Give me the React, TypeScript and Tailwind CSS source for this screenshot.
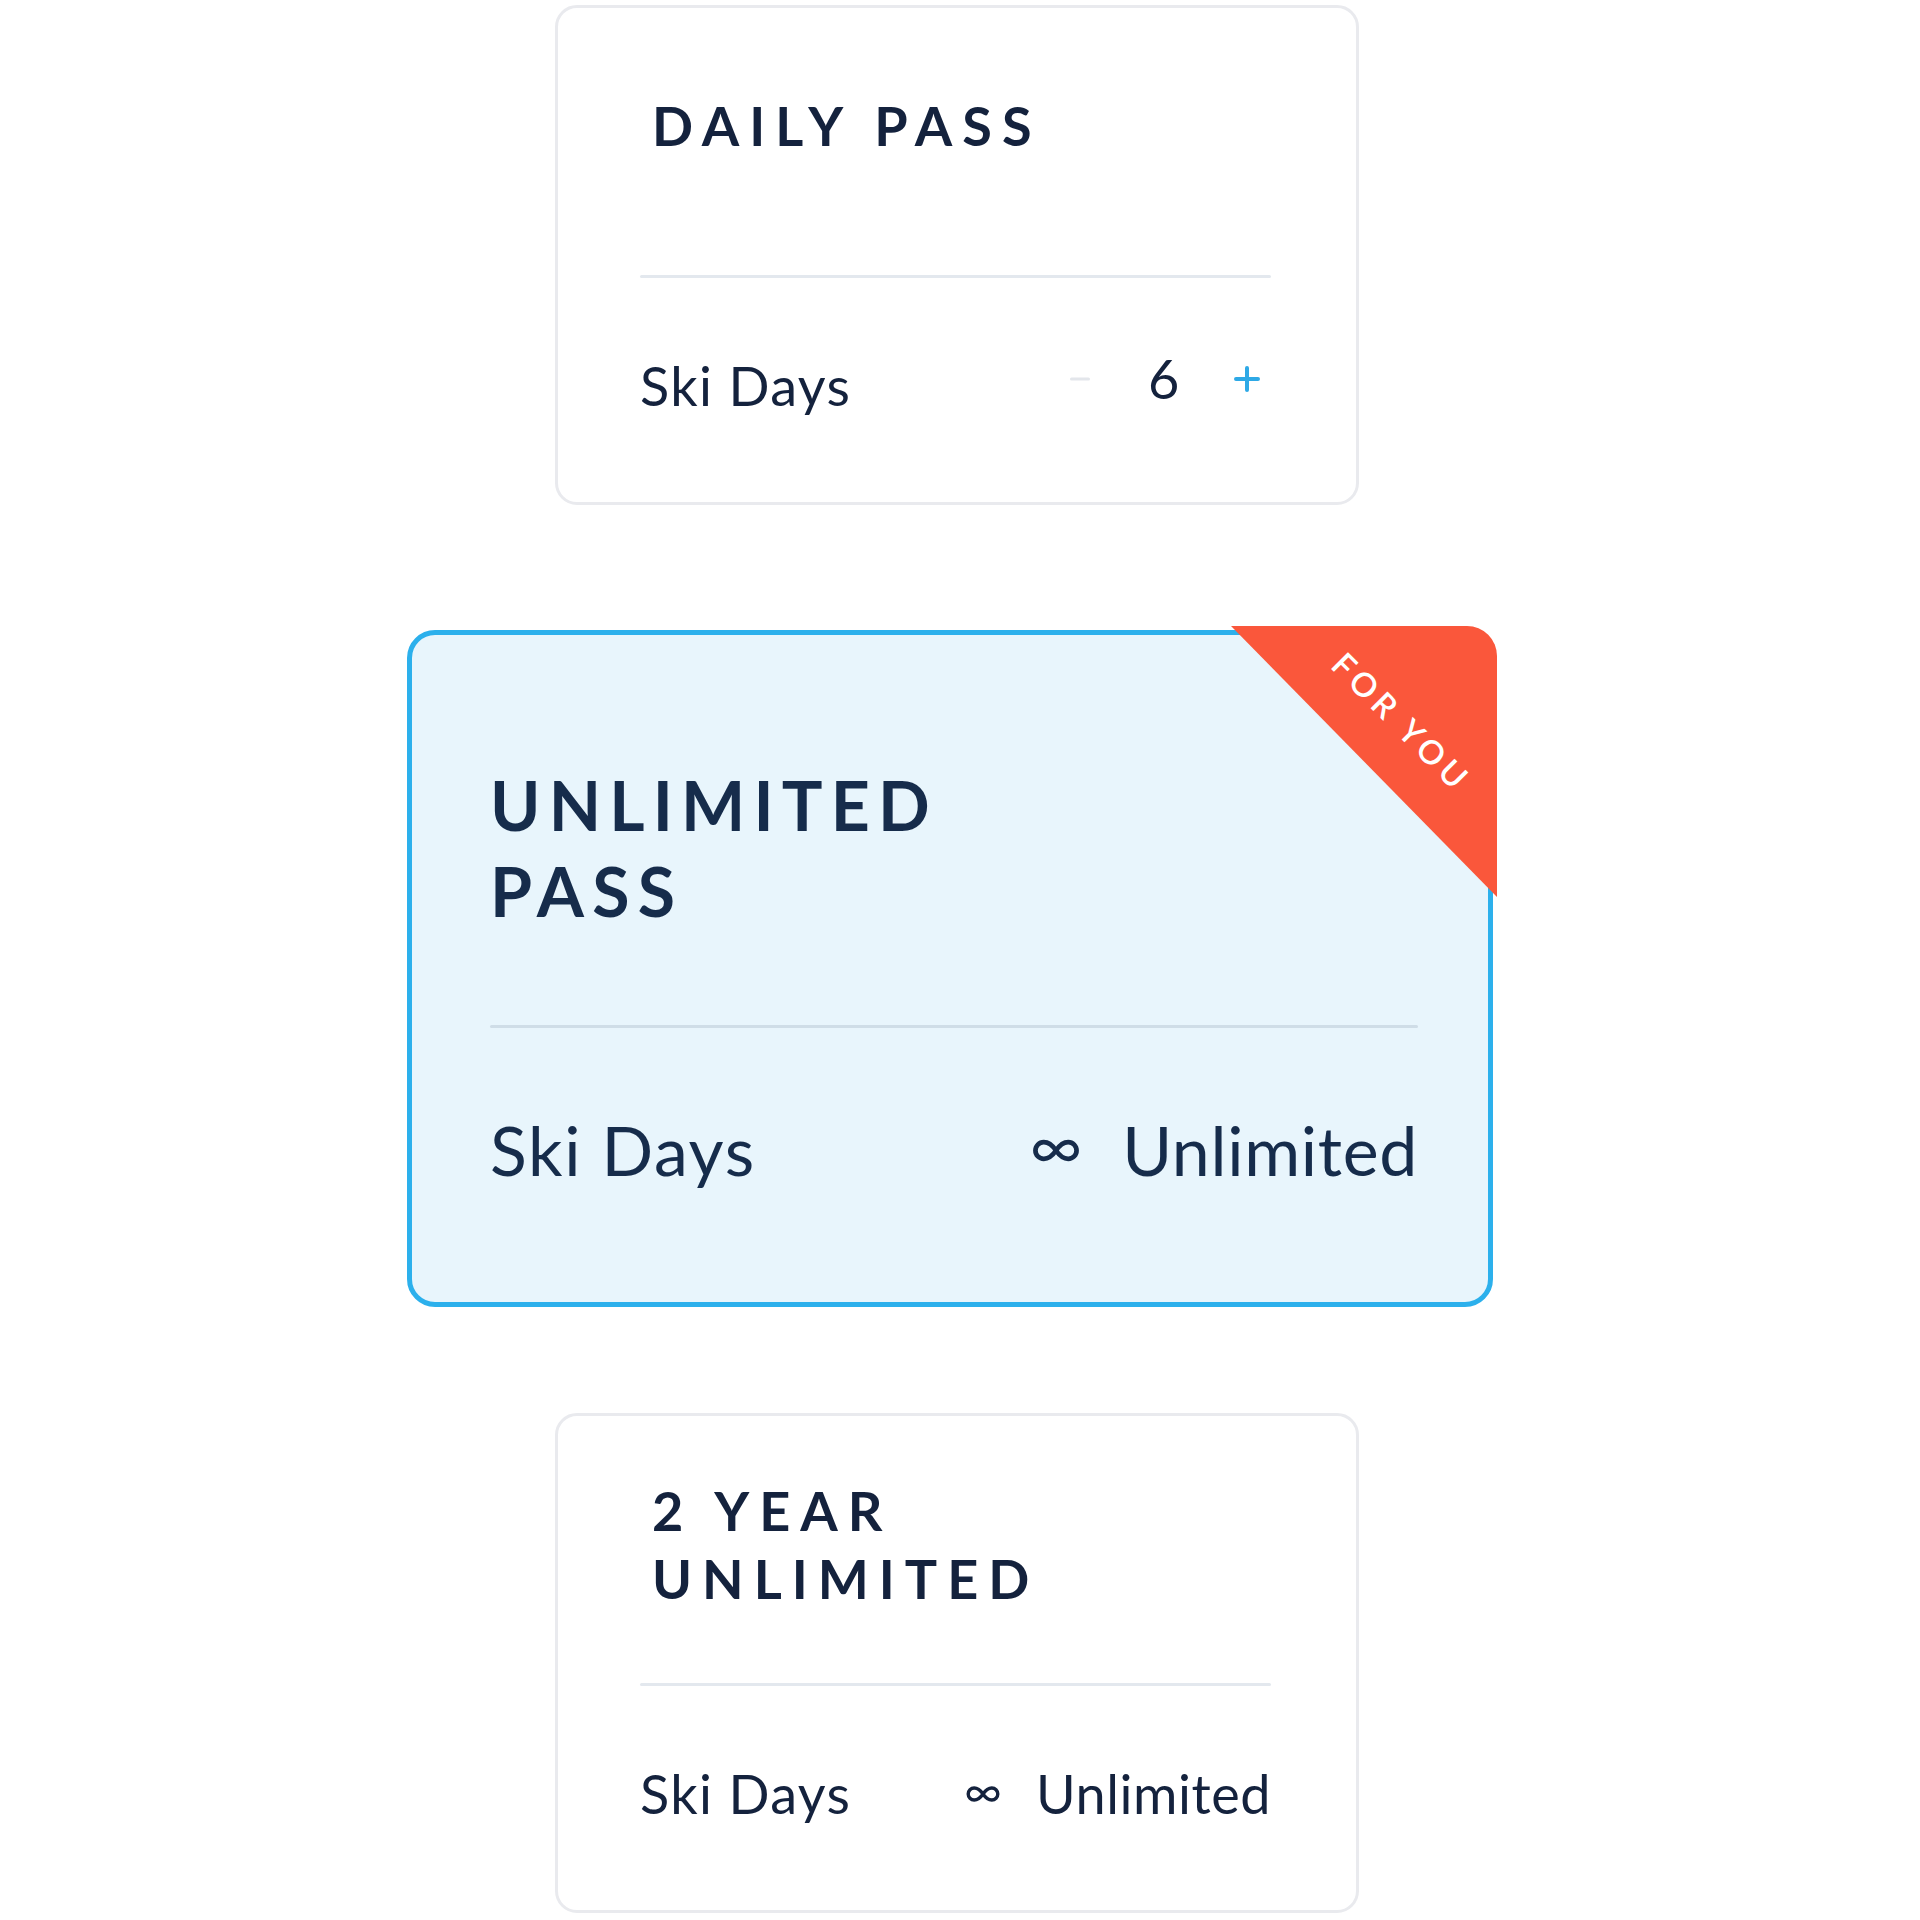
import type { ReactNode } from "react";

function InfinityMark({ className }: { className?: string }) {
  return (
    <svg viewBox="0 0 36 18" fill="none" className={className}>
      <path
        d="M18 9C15 4.6 12.6 3 9.2 3a6 6 0 0 0 0 12c3.4 0 5.8-1.6 8.8-6zm0 0c3-4.4 5.4-6 8.8-6a6 6 0 0 1 0 12c-3.4 0-5.8-1.6-8.8-6z"
        stroke="currentColor"
        strokeWidth="3.4"
        strokeLinejoin="round"
      />
    </svg>
  );
}

function Counter({ value }: { value: number }) {
  return (
    <div className="flex items-center gap-[44px] mb-[14px]">
      <button className="w-12 h-12 flex items-center justify-center" aria-label="decrease">
        <svg viewBox="0 0 20 4" className="w-[20px] h-[4px]">
          <line x1="1.5" y1="2" x2="18.5" y2="2" stroke="#e3e6eb" strokeWidth="3" strokeLinecap="round" />
        </svg>
      </button>
      <span className="w-[31px] text-center">{value}</span>
      <button className="w-12 h-12 flex items-center justify-center" aria-label="increase">
        <svg viewBox="0 0 26 26" className="w-[26px] h-[26px]">
          <path d="M13 2v22M2 13h22" stroke="#2ea9e6" strokeWidth="4" strokeLinecap="round" />
        </svg>
      </button>
    </div>
  );
}

function UnlimitedValue({ big }: { big?: boolean }) {
  return (
    <div className={big ? "flex items-center gap-[41px]" : "flex items-center gap-[35px]"}>
      <InfinityMark className={big ? "w-[50px] h-[25px]" : "w-[36px] h-[18px]"} />
      <span className="tracking-[0.01em]">Unlimited</span>
    </div>
  );
}

function WhiteCard({
  title,
  titleClass,
  children,
}: {
  title: ReactNode;
  titleClass: string;
  children: ReactNode;
}) {
  return (
    <section className="w-[804px] h-[500px] mr-[6px] rounded-[22px] border-[3px] border-[#e9eaee] bg-white pl-[82px] pr-[85px] text-[#14223d] flex flex-col">
      <h2 className={`pl-[12px] max-w-[460px] text-[54px] leading-[68px] font-bold tracking-[0.185em] uppercase ${titleClass}`}>
        {title}
      </h2>
      <div className="h-[3px] bg-[#e3e8ee] rounded-full" />
      <div className="mt-[74px] h-[68px] flex items-center justify-between text-[54px] leading-[68px]">
        {children}
      </div>
    </section>
  );
}

export default function App() {
  return (
    <div className="min-h-[1920px] w-full bg-white flex flex-col items-center pt-[5px] font-[Lato,sans-serif]">
      <WhiteCard title="Daily Pass" titleClass="pt-[84px] mb-[115px]">
        <span className="tracking-[0.025em]">Ski Days</span>
        <Counter value={6} />
      </WhiteCard>

      <section className="relative mt-[125px] mr-[20px] w-[1086px] h-[677px] rounded-[28px] border-[5px] border-[#2cb0ec] bg-[#e8f5fc] pl-[78px] pr-[70px] pt-[127px] text-[#162c4b] flex flex-col">
        <div className="absolute -top-[9px] -right-[9px] w-[266px] h-[271px] rounded-tr-[30px] bg-[#fa573b] [clip-path:polygon(0_0,100%_0,100%_100%)]">
          <span className="absolute left-[171px] top-[96px] -translate-x-1/2 -translate-y-1/2 rotate-45 whitespace-nowrap text-white text-[33px] leading-none font-semibold tracking-[0.16em]">
            FOR YOU
          </span>
        </div>
        <h2 className="max-w-[600px] text-[68px] leading-[86px] font-bold tracking-[0.12em] uppercase">
          Unlimited Pass
        </h2>
        <div className="mt-[91px] h-[3px] bg-[#cfdde7] rounded-full" />
        <div className="mt-[79px] h-[86px] flex items-center justify-between text-[68px] leading-[86px]">
          <span className="tracking-[0.025em]">Ski Days</span>
          <UnlimitedValue big />
        </div>
      </section>

      <div className="mt-[106px]">
        <WhiteCard title="2 Year Unlimited" titleClass="pt-[61px] mb-[70px]">
          <span className="tracking-[0.025em]">Ski Days</span>
          <UnlimitedValue />
        </WhiteCard>
      </div>
    </div>
  );
}
